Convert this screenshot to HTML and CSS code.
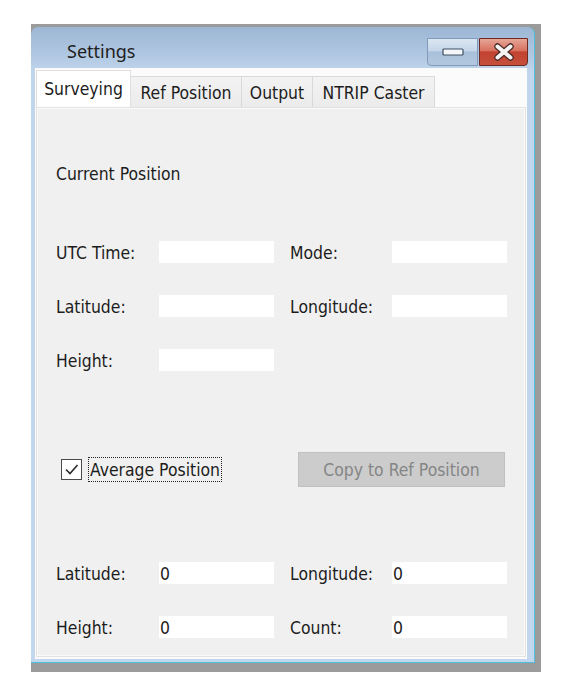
FILE: index.html
```html
<!DOCTYPE html>
<html>
<head>
<meta charset="utf-8">
<link rel="stylesheet" href="styles.css">
</head>
<body>
<div class="shot">
  <div class="window">
    <div class="titlebar">
      <span class="title">Settings</span>
      <div class="controls">
        <div class="cbtn min">
          <svg width="22" height="8" viewBox="0 0 22 8"><rect x="1" y="1" width="20" height="6" rx="1" fill="#f4f6f9" stroke="#3e4e63" stroke-width="1.2"/></svg>
        </div>
        <div class="cbtn close">
          <svg width="24" height="18" viewBox="0 0 24 18">
            <path d="M5.5 3.5 L18.5 14.5 M18.5 3.5 L5.5 14.5" stroke="#4a2a26" stroke-width="6.4" stroke-linecap="round"/>
            <path d="M5.5 3.5 L18.5 14.5 M18.5 3.5 L5.5 14.5" stroke="#f4f4f4" stroke-width="4" stroke-linecap="round"/>
          </svg>
        </div>
      </div>
    </div>
    <div class="client">
      <div class="tabs">
        <div class="tab active w1">Surveying</div>
        <div class="tab w2">Ref Position</div>
        <div class="tab w3">Output</div>
        <div class="tab w4">NTRIP Caster</div>
      </div>
      <div class="panel">
        <div class="heading">Current Position</div>
        <div class="grid top">
          <span class="lbl">UTC Time:</span><span class="box"></span>
          <span class="lbl">Mode:</span><span class="box"></span>
          <span class="lbl">Latitude:</span><span class="box"></span>
          <span class="lbl">Longitude:</span><span class="box"></span>
          <span class="lbl">Height:</span><span class="box"></span>
        </div>
        <div class="actions">
          <div class="check">
            <span class="cb">
              <svg width="17" height="17" viewBox="0 0 17 17"><path d="M3 8.5 L7 12.5 L14.5 4" fill="none" stroke="#2b2b2b" stroke-width="1.6"/></svg>
            </span>
            <span class="cblabel">Average Position</span>
          </div>
          <div class="btn">Copy to Ref Position</div>
        </div>
        <div class="grid bottom">
          <span class="lbl">Latitude:</span><span class="box">0</span>
          <span class="lbl">Longitude:</span><span class="box">0</span>
          <span class="lbl">Height:</span><span class="box">0</span>
          <span class="lbl">Count:</span><span class="box">0</span>
        </div>
      </div>
    </div>
  </div>
</div>
</body>
</html>
```

FILE: styles.css
```css
html, body {
  margin: 0;
  padding: 0;
  background: #ffffff;
}
body {
  font-family: "DejaVu Sans Condensed", "DejaVu Sans", sans-serif;
  font-size: 17.4px;
  color: #1c1c1c;
}
.shot {
  margin: 24px 0 0 31px;
  width: 510px;
  height: 648px;
  background: #9b9b9b;
  padding-top: 3px;
  box-sizing: border-box;
}
.window {
  width: 504px;
  height: 636px;
  box-sizing: border-box;
  border-radius: 7px 7px 0 0;
  background: linear-gradient(#9cb6d4 0px, #b2c9e3 30px, #c1d6ec 45px, #c2d7ed 100%);
  border-right: 1px solid #4fc0dc;
  border-bottom: 1px solid #4fc0dc;
  display: flex;
  flex-direction: column;
}
.titlebar {
  height: 41px;
  flex: none;
  display: flex;
  justify-content: space-between;
  padding-left: 36px;
  padding-right: 6px;
}
.title {
  font-family: "Noto Sans", "DejaVu Sans", sans-serif;
  font-size: 18px;
  line-height: 48px;
  color: #1e1e1e;
}
.controls {
  display: flex;
  margin-top: 11px;
  height: 28px;
  gap: 1px;
}
.cbtn {
  height: 28px;
  box-sizing: border-box;
  display: flex;
  align-items: center;
  justify-content: center;
}
.min {
  width: 51px;
  border: 1px solid #7f9aba;
  border-radius: 0 0 0 4px;
  background: linear-gradient(#dbe6f2 0%, #c5d6ea 45%, #a9c0da 50%, #b3c8df 100%);
}
.close {
  width: 49px;
  border: 1px solid #6f2a24;
  border-radius: 0 0 4px 0;
  background: linear-gradient(#e7a697 0%, #d7705f 45%, #c2412f 50%, #c5503c 100%);
}
.client {
  flex: 1;
  margin: 0 7px 3px 4px;
  background: #fbfbfb;
  display: flex;
  flex-direction: column;
  padding: 0 1px 2px 1px;
}
.tabs {
  height: 39px;
  flex: none;
  display: flex;
  align-items: flex-end;
}
.tab {
  height: 31px;
  box-sizing: border-box;
  border: 1px solid #d9d9d9;
  border-bottom: none;
  margin-left: -1px;
  background: linear-gradient(#f3f3f3, #ebebeb);
  display: flex;
  align-items: center;
  justify-content: center;
  padding-top: 1px;
}
.tab.active {
  height: 37px;
  margin-left: 0;
  background: #ffffff;
  border-color: #e0e0e0;
  position: relative;
  z-index: 1;
  padding-top: 0;
  padding-bottom: 1px;
}
.w1 { width: 95px; }
.w2 { width: 112px; }
.w3 { width: 72px; }
.w4 { width: 123px; }
.panel {
  flex: 1;
  background: #f0f0f0;
  border: 1px solid #e2e2e2;
  box-shadow: inset 0 0 0 1px #fafafa;
  padding: 54px 19px 0 19px;
}
.heading {
  line-height: 22px;
  height: 22px;
  padding-top: 1px;
}
.grid {
  display: grid;
  grid-template-columns: 103px 131px 102px 115px;
  grid-auto-rows: 22px;
  row-gap: 32px;
  align-items: center;
}
.grid.top {
  margin-top: 56px;
}
.grid.bottom {
  margin-top: 75px;
}
.lbl {
  line-height: 22px;
  padding-top: 2px;
}
.box {
  display: block;
  width: 115px;
  height: 22px;
  line-height: 22px;
  background: #ffffff;
  padding: 1px 0 0 1px;
  box-sizing: border-box;
}
.actions {
  display: flex;
  align-items: center;
  justify-content: space-between;
  margin-top: 81px;
  height: 35px;
}
.check {
  display: flex;
  align-items: center;
  margin-left: 5px;
}
.cb {
  width: 21px;
  height: 21px;
  box-sizing: border-box;
  border: 1px solid #4a4a4a;
  background: #ffffff;
  display: flex;
  align-items: center;
  justify-content: center;
}
.cblabel {
  margin-left: 7px;
  padding: 1px 1px 0 1px;
  line-height: 22px;
  outline: 1px dotted #222;
  outline-offset: 0;
}
.btn {
  width: 207px;
  height: 35px;
  box-sizing: border-box;
  background: #cccccc;
  border: 1px solid #c0c0c0;
  color: #858585;
  display: flex;
  align-items: center;
  justify-content: center;
  margin-right: 1px;
}
```
